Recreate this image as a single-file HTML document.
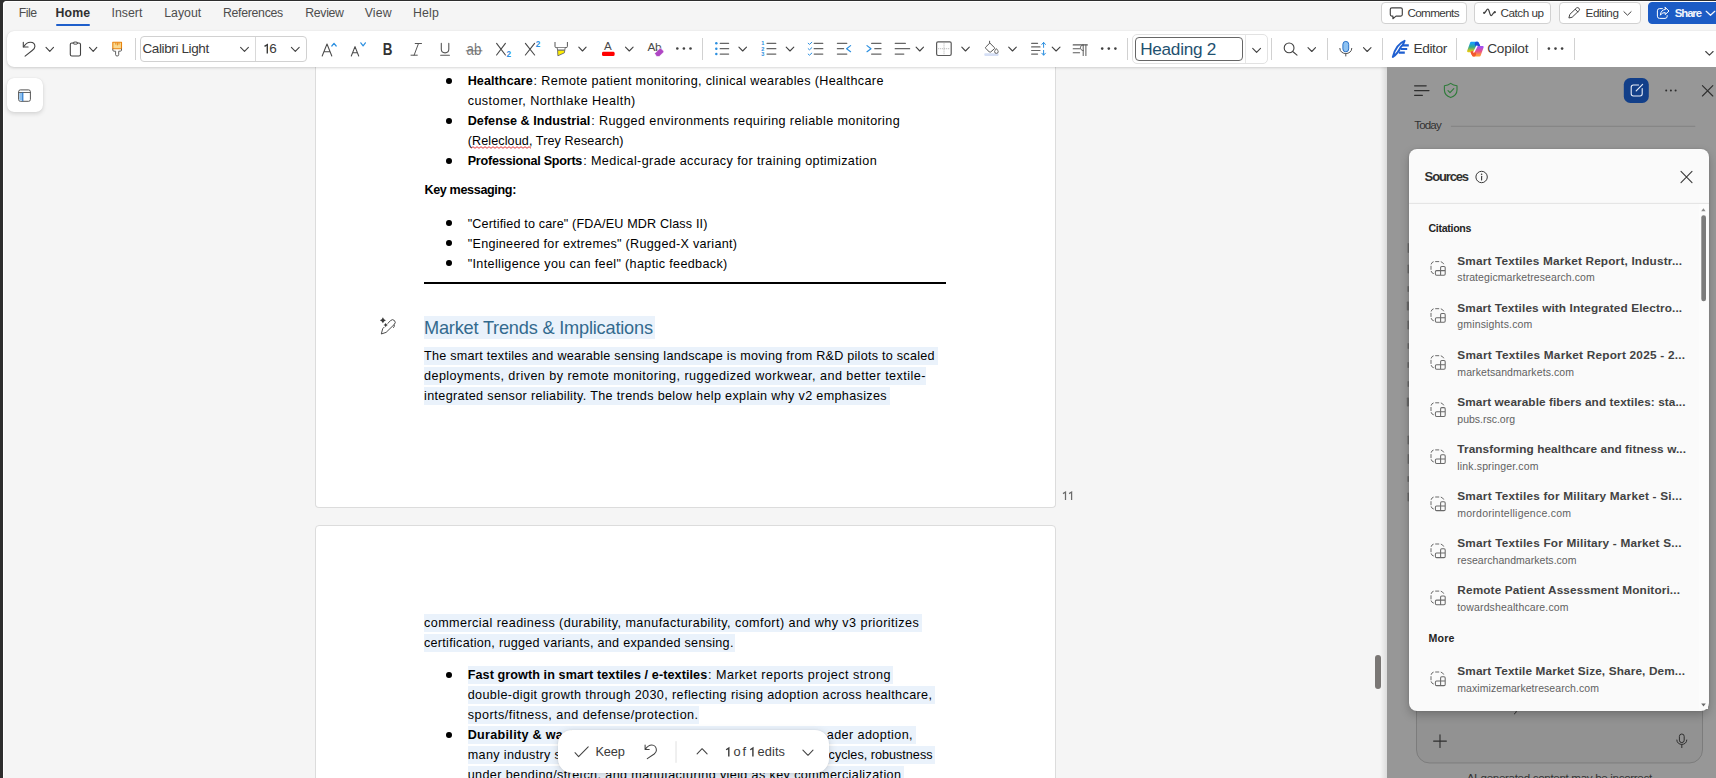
<!DOCTYPE html>
<html><head><meta charset="utf-8"><title>Word</title>
<style>
*{box-sizing:border-box;margin:0;padding:0}
html,body{width:1716px;height:778px;overflow:hidden;background:#2e2e2e;font-family:"Liberation Sans",sans-serif}
#app{position:absolute;left:0;top:0;width:1716px;height:778px;overflow:hidden}
#bg{position:absolute;left:3px;top:1px;width:1713px;height:777px;background:#f5f5f5;border-top-left-radius:4px;box-shadow:inset 1px 1px 0 #fff}
.t{position:absolute;white-space:pre;line-height:20px;height:20px;z-index:2}
.abs{position:absolute}
/* ribbon */
#ribbon{position:absolute;left:7px;top:31px;width:1716px;height:36px;background:#fff;border-radius:7px 0 0 7px;box-shadow:0 1px 3px rgba(0,0,0,.16),0 0 1px rgba(0,0,0,.10)}
#homeul{position:absolute;left:55.5px;top:23.7px;width:34.7px;height:2px;background:#1e5fcb;border-radius:1px}
.tbtn{position:absolute;top:2.4px;height:21.2px;border:1px solid #d1d1d1;border-radius:4px;background:#fff}
.vsep{position:absolute;width:1px;background:#d1d1d1;top:38.4px;height:21.2px}
.combo{position:absolute;border:1px solid #d1d1d1;border-radius:4px;background:#fff}
/* doc */
#sidebtn{position:absolute;left:7px;top:78.2px;width:35.5px;height:34px;background:#fff;border-radius:7px;box-shadow:0 2px 4px rgba(0,0,0,.13),0 0 1px rgba(0,0,0,.12)}
.page{position:absolute;left:315px;width:741px;background:#fff;border:1px solid #dcdcdc}
.hl{position:absolute;background:#eaf2fb;height:17.5px;z-index:1}
.bul{position:absolute;width:5.8px;height:5.8px;border-radius:50%;background:#000;z-index:2}
/* panel */
#panel{position:absolute;left:1387px;top:67px;width:329px;height:711px;background:#979797}
#card{position:absolute;left:1409px;top:149px;width:300px;height:561.5px;background:#fafafa;border-radius:8px;z-index:5;box-shadow:0 4px 10px rgba(0,0,0,.22),0 0 2px rgba(0,0,0,.15)}
#float{position:absolute;left:557.6px;top:730px;width:271px;height:43px;background:#fff;border-radius:14px;z-index:5;box-shadow:0 2px 8px rgba(0,0,0,.14),0 0 2px rgba(0,0,0,.10)}
svg{position:absolute;overflow:visible}
</style></head><body>
<div id="app">
<div id="bg"></div>
<!-- menu -->
<div id="homeul"></div>
<div class="tbtn" style="left:1381px;width:86px"></div>
<div class="tbtn" style="left:1474px;width:77.3px"></div>
<div class="tbtn" style="left:1558.5px;width:82.3px"></div>
<div class="tbtn" style="left:1648px;width:80px;background:#1b5bc5;border-color:#1b5bc5"></div>
<div class="page" style="top:60px;height:447.5px;border-top:none;border-radius:0 0 4px 4px"></div>
<div class="page" style="top:525px;height:300px;border-radius:4px 4px 0 0"></div>
<!-- ribbon -->
<div id="ribbon"></div>
<div class="vsep" style="left:134.8px"></div>
<div class="combo" style="left:140.3px;top:36.4px;width:166.3px;height:25.2px"></div>
<div class="abs" style="left:255.3px;top:37px;width:1px;height:24px;background:#d9d9d9"></div>
<div class="vsep" style="left:702.1px"></div>
<div class="vsep" style="left:1127.3px"></div>
<div class="combo" style="left:1132.2px;top:34.4px;width:135.8px;height:29.3px;border-color:#e2e2e2;border-radius:5px"></div>
<div class="abs" style="left:1134.8px;top:37.1px;width:108.2px;height:23.7px;border:1.3px solid #666;border-radius:4px;background:#fff"></div>
<div class="abs" style="left:1245.2px;top:35.2px;width:1px;height:27.6px;background:#e6e6e6"></div>
<div class="vsep" style="left:1271.2px"></div>
<div class="vsep" style="left:1326.8px"></div>
<div class="vsep" style="left:1381.9px"></div>
<div class="vsep" style="left:1456px"></div>
<div class="vsep" style="left:1537px"></div>
<div class="vsep" style="left:1574px"></div>
<!-- doc area -->
<div id="sidebtn"></div>
<div class="bul" style="left:446.2px;top:77.9px"></div>
<div class="bul" style="left:446.2px;top:117.9px"></div>
<div class="bul" style="left:446.2px;top:157.9px"></div>
<div class="bul" style="left:446.2px;top:220.3px"></div>
<div class="bul" style="left:446.2px;top:240.3px"></div>
<div class="bul" style="left:446.2px;top:260.3px"></div>
<div class="bul" style="left:446.2px;top:671.9px"></div>
<div class="bul" style="left:446.2px;top:731.9px"></div>
<div class="hl" style="left:424.0px;top:315.8px;width:230.5px;height:22.8px"></div>
<div class="hl" style="left:424.0px;top:347.0px;width:513.6px;height:17.5px"></div>
<div class="hl" style="left:424.0px;top:367.0px;width:502.4px;height:17.5px"></div>
<div class="hl" style="left:424.0px;top:387.0px;width:466.4px;height:17.5px"></div>
<div class="hl" style="left:424.0px;top:614.0px;width:498.2px;height:17.5px"></div>
<div class="hl" style="left:424.0px;top:634.0px;width:310.5px;height:17.5px"></div>
<div class="hl" style="left:467.7px;top:666.0px;width:425.5px;height:17.5px"></div>
<div class="hl" style="left:467.7px;top:686.0px;width:467.3px;height:17.5px"></div>
<div class="hl" style="left:467.7px;top:706.0px;width:231.3px;height:17.5px"></div>
<div class="hl" style="left:467.7px;top:726.0px;width:448.3px;height:17.5px"></div>
<div class="hl" style="left:467.7px;top:746.0px;width:467.8px;height:17.5px"></div>
<div class="hl" style="left:467.7px;top:766.0px;width:436.3px;height:17.5px"></div>
<div class="abs" style="left:424.4px;top:282.2px;width:521.5px;height:1.6px;background:#000;z-index:2"></div>
<svg style="left:0;top:0;z-index:2" width="1716" height="778"><path d="M471 148.3 L473.0 146.7 L475.0 148.3 L477.0 146.7 L479.0 148.3 L481.0 146.7 L483.0 148.3 L485.0 146.7 L487.0 148.3 L489.0 146.7 L491.0 148.3 L493.0 146.7 L495.0 148.3 L497.0 146.7 L499.0 148.3 L501.0 146.7 L503.0 148.3 L505.0 146.7 L507.0 148.3 L509.0 146.7 L511.0 148.3 L513.0 146.7 L515.0 148.3 L517.0 146.7 L519.0 148.3 L521.0 146.7 L523.0 148.3 L525.0 146.7 L527.0 148.3 L529.0 146.7 L531.0 148.3" fill="none" stroke="#e53030" stroke-width="0.95" stroke-linejoin="round"/></svg>
<div class="abs" style="left:1375.4px;top:654.7px;width:5.8px;height:34.8px;border-radius:3px;background:#7a7775"></div>

<!-- panel -->
<div class="abs" style="left:1380px;top:67px;width:7px;height:711px;background:linear-gradient(to right,rgba(0,0,0,0),rgba(0,0,0,.10))"></div>
<div id="panel"></div>
<div id="card"></div>
<div id="float"></div>
<svg style="left:0;top:0;z-index:3" width="1716" height="778"><path d="M23.3 42.2 V47 H28.1" fill="none" stroke="#424242" stroke-width="1.1" stroke-linecap="round" stroke-linejoin="round" />
<path d="M23.7 46.8 C25.3 44 27.8 42.2 30.4 42.2 C33 42.2 34.9 44 34.9 46.5 C34.9 48.1 33.8 49.3 32.2 50.5 L25.1 56.1" fill="none" stroke="#424242" stroke-width="1.1" stroke-linecap="round" stroke-linejoin="round" />
<path d="M46.0 47.3 L49.8 51.3 L53.5 47.3" fill="none" stroke="#424242" stroke-width="1.1" stroke-linecap="round" stroke-linejoin="round" />
<rect x="70.3" y="43.0" width="10.2" height="13.0" rx="1.6" fill="none" stroke="#424242" stroke-width="1.1" />
<ellipse cx="75.4" cy="43.1" rx="2.4" ry="1.1" fill="#fff" stroke="#424242" stroke-width="1"/>
<path d="M89.5 47.3 L93.2 51.3 L96.8 47.3" fill="none" stroke="#424242" stroke-width="1.1" stroke-linecap="round" stroke-linejoin="round" />
<path d="M112.8 42.3 H121.5 V48.8 H112.8 Z" fill="#f9d88f" stroke="#e8830e" stroke-width="1.1" stroke-linejoin="round"/>
<path d="M115.8 42.6 V44.6 M117.4 42.6 V45.4 M119 42.6 V44.6" stroke="#e8830e" stroke-width="0.9" fill="none"/>
<path d="M112.8 49 V50 Q112.8 51.2 114 51.2 H115.6 V54.8 Q115.6 56 117.15 56 Q118.7 56 118.7 54.8 V51.2 H120.3 Q121.5 51.2 121.5 50 V49" fill="none" stroke="#616161" stroke-width="1.0" stroke-linecap="round" stroke-linejoin="round" />
<path d="M240.6 47.3 L244.5 51.3 L248.4 47.3" fill="none" stroke="#424242" stroke-width="1.1" stroke-linecap="round" stroke-linejoin="round" />
<path d="M291.4 47.3 L295.3 51.3 L299.2 47.3" fill="none" stroke="#424242" stroke-width="1.1" stroke-linecap="round" stroke-linejoin="round" />
<path d="M322.2 56 L327 44 L331.8 56 M323.9 51.8 H330.1" fill="none" stroke="#4a4a4a" stroke-width="1.05" stroke-linecap="round" stroke-linejoin="round" />
<path d="M331.8 46.0 L334.0 43.3 L336.2 46.0" fill="none" stroke="#2b8fe0" stroke-width="1.2" stroke-linecap="round" stroke-linejoin="round" />
<path d="M351.3 56 L355 46.6 L358.7 56 M352.7 52.7 H357.3" fill="none" stroke="#4a4a4a" stroke-width="1.05" stroke-linecap="round" stroke-linejoin="round" />
<path d="M360.8 42.8 L363.1 45.9 L365.4 42.8" fill="none" stroke="#2b8fe0" stroke-width="1.2" stroke-linecap="round" stroke-linejoin="round" />
<text transform="translate(382.7 55) scale(0.86 1)" font-size="15.6" font-weight="700" fill="#333" font-family="Liberation Sans, sans-serif">B</text>
<path d="M415.2 43.5 H421.5 M411 55.2 H417.3 M418.5 43.5 L414.1 55.2" fill="none" stroke="#555" stroke-width="1.0" stroke-linecap="round" stroke-linejoin="round" />
<path d="M441.3 43.4 V49.3 C441.3 54 448.8 54 448.8 49.3 V43.4" fill="none" stroke="#555" stroke-width="1.1" stroke-linecap="round" stroke-linejoin="round" />
<path d="M440.7 55.2 H449.4" fill="none" stroke="#555" stroke-width="1.1" stroke-linecap="round" stroke-linejoin="round" />
<text transform="translate(466.6 55.4) scale(0.78 1)" font-size="17" fill="#777" font-family="Liberation Sans, sans-serif">ab</text>
<path d="M466.2 50.8 H482" fill="none" stroke="#666" stroke-width="0.9" stroke-linecap="round" stroke-linejoin="round" />
<path d="M496.6 43.4 L505.4 55 M505.4 43.4 L496.6 55" fill="none" stroke="#4a4a4a" stroke-width="1.15" stroke-linecap="round" stroke-linejoin="round" />
<text x="506.5" y="57.0" font-size="8.2" font-weight="700" fill="#2b8fe0" font-family="Liberation Sans, sans-serif" >2</text>
<path d="M525.4 43.4 L534.6 55 M534.6 43.4 L525.4 55" fill="none" stroke="#4a4a4a" stroke-width="1.15" stroke-linecap="round" stroke-linejoin="round" />
<text x="535.7" y="47.2" font-size="8.2" font-weight="700" fill="#2b8fe0" font-family="Liberation Sans, sans-serif" >2</text>
<path d="M555 42.4 V46.4 Q555 47.6 556.2 47.6 H566.2 Q567.4 47.6 567.4 46.4 V42.4" fill="none" stroke="#555" stroke-width="1.0" stroke-linecap="round" stroke-linejoin="round" />
<path d="M557.2 47.8 L557.6 50.2 H564.8 L565.2 47.8" fill="#fff" stroke="#666" stroke-width="0.9" stroke-linejoin="round"/>
<path d="M557.6 50.2 H564.8 L564.4 52.8 L557.9 55.8 Z" fill="#ffee00" stroke="#666" stroke-width="0.9" stroke-linejoin="round"/>
<path d="M578.8 47.2 L582.5 51.0 L586.1 47.2" fill="none" stroke="#424242" stroke-width="1.1" stroke-linecap="round" stroke-linejoin="round" />
<text x="603.9" y="50.1" font-size="11.6" font-weight="400" fill="#4a4a4a" font-family="Liberation Sans, sans-serif" >A</text>
<rect x="602.0" y="51.8" width="12.6" height="4.3" rx="1.4" fill="#ff0000" stroke="none" stroke-width="0" />
<path d="M625.5 47.2 L629.3 51.0 L633.1 47.2" fill="none" stroke="#424242" stroke-width="1.1" stroke-linecap="round" stroke-linejoin="round" />
<text x="647.4" y="50.6" font-size="11.8" font-weight="400" fill="#4a4a4a" font-family="Liberation Sans, sans-serif" letter-spacing="-0.3">Ab</text>
<path d="M654.6 53.6 L659.6 48.6 Q660.4 47.8 661.2 48.6 L663.4 50.8 Q664.2 51.6 663.4 52.4 L659.2 56.6 H656.6 Z" fill="#b046c4" stroke="#fff" stroke-width="0.6"/>
<circle cx="677.3" cy="48.5" r="1.3" fill="#424242"/>
<circle cx="683.9" cy="48.5" r="1.3" fill="#424242"/>
<circle cx="690.5" cy="48.5" r="1.3" fill="#424242"/>
<circle cx="716.3" cy="43.3" r="1.25" fill="#2b8fe0"/>
<path d="M720.2 43.3 H728.6" fill="none" stroke="#666" stroke-width="1.25" stroke-linecap="round" stroke-linejoin="round" />
<circle cx="716.3" cy="48.7" r="1.25" fill="#2b8fe0"/>
<path d="M720.2 48.7 H728.6" fill="none" stroke="#666" stroke-width="1.25" stroke-linecap="round" stroke-linejoin="round" />
<circle cx="716.3" cy="54.1" r="1.25" fill="#2b8fe0"/>
<path d="M720.2 54.1 H728.6" fill="none" stroke="#666" stroke-width="1.25" stroke-linecap="round" stroke-linejoin="round" />
<path d="M738.9 47.2 L742.7 51.0 L746.5 47.2" fill="none" stroke="#424242" stroke-width="1.1" stroke-linecap="round" stroke-linejoin="round" />
<text x="761.2" y="45.3" font-size="5.6" font-weight="700" fill="#2b8fe0" font-family="Liberation Sans, sans-serif" >1</text>
<path d="M767 43.3 H775.8" fill="none" stroke="#666" stroke-width="1.25" stroke-linecap="round" stroke-linejoin="round" />
<text x="761.2" y="50.7" font-size="5.6" font-weight="700" fill="#2b8fe0" font-family="Liberation Sans, sans-serif" >2</text>
<path d="M767 48.7 H775.8" fill="none" stroke="#666" stroke-width="1.25" stroke-linecap="round" stroke-linejoin="round" />
<text x="761.2" y="56.1" font-size="5.6" font-weight="700" fill="#2b8fe0" font-family="Liberation Sans, sans-serif" >3</text>
<path d="M767 54.1 H775.8" fill="none" stroke="#666" stroke-width="1.25" stroke-linecap="round" stroke-linejoin="round" />
<path d="M786.2 47.2 L790.0 51.0 L793.8 47.2" fill="none" stroke="#424242" stroke-width="1.1" stroke-linecap="round" stroke-linejoin="round" />
<path d="M808.2 43.3 L809.5 44.4 L811.8 42.3" fill="none" stroke="#2b8fe0" stroke-width="1.0" stroke-linecap="round" stroke-linejoin="round" />
<path d="M814.2 43.3 H822.8" fill="none" stroke="#666" stroke-width="1.25" stroke-linecap="round" stroke-linejoin="round" />
<path d="M808.2 48.7 L809.5 49.8 L811.8 47.7" fill="none" stroke="#2b8fe0" stroke-width="1.0" stroke-linecap="round" stroke-linejoin="round" />
<path d="M814.2 48.7 H822.8" fill="none" stroke="#666" stroke-width="1.25" stroke-linecap="round" stroke-linejoin="round" />
<path d="M808.2 54.1 L809.5 55.2 L811.8 53.1" fill="none" stroke="#2b8fe0" stroke-width="1.0" stroke-linecap="round" stroke-linejoin="round" />
<path d="M814.2 54.1 H822.8" fill="none" stroke="#666" stroke-width="1.25" stroke-linecap="round" stroke-linejoin="round" />
<path d="M837.4 43.3 H846.8 M837.4 48.7 H843.6 M837.4 54.1 H846.8" fill="none" stroke="#666" stroke-width="1.25" stroke-linecap="round" stroke-linejoin="round" />
<path d="M850.6 45.6 L846.6 48.7 L850.6 51.7" fill="none" stroke="#2b8fe0" stroke-width="1.2" stroke-linecap="round" stroke-linejoin="round" />
<path d="M871.6 43.3 H881 M874.8 48.7 H881 M871.6 54.1 H881" fill="none" stroke="#666" stroke-width="1.25" stroke-linecap="round" stroke-linejoin="round" />
<path d="M867 45.6 L871 48.7 L867 51.7" fill="none" stroke="#2b8fe0" stroke-width="1.2" stroke-linecap="round" stroke-linejoin="round" />
<path d="M895.2 43.3 H905.4 M895.2 48.7 H909.6 M895.2 54.1 H903.8" fill="none" stroke="#666" stroke-width="1.25" stroke-linecap="round" stroke-linejoin="round" />
<path d="M916.1 47.2 L919.8 51.0 L923.5 47.2" fill="none" stroke="#424242" stroke-width="1.1" stroke-linecap="round" stroke-linejoin="round" />
<rect x="936.6" y="41.9" width="14.6" height="13.6" rx="1.4" fill="none" stroke="#5a5a5a" stroke-width="1.2" />
<path d="M944 43.4 V54.2 M938.2 48.7 H949.8" stroke="#9a9a9a" stroke-width="0.8" stroke-dasharray="1 1" fill="none"/>
<path d="M961.8 47.2 L965.5 51.0 L969.3 47.2" fill="none" stroke="#424242" stroke-width="1.1" stroke-linecap="round" stroke-linejoin="round" />
<rect x="984.3" y="53.3" width="14.3" height="2.6" rx="0.8" fill="#d5dff5" stroke="none" stroke-width="0" />
<path d="M989.6 41.2 V44.2" fill="none" stroke="#555" stroke-width="1.0" stroke-linecap="round" stroke-linejoin="round" />
<path d="M989.8 43.0 L994.4 47.6 Q995 48.2 994.4 48.8 L990.6 52.0 Q990 52.5 989.4 52.0 L985.7 48.3 Q985.2 47.7 985.7 47.1 Z" fill="#fff" stroke="#555" stroke-width="1.0" stroke-linejoin="round"/>
<path d="M996.4 48.6 Q998.2 50.8 998.2 51.6 A1.8 1.8 0 0 1 994.6 51.6 Q994.6 50.8 996.4 48.6 Z" fill="#fff" stroke="#555" stroke-width="0.9"/>
<path d="M1008.7 47.2 L1012.5 51.0 L1016.3 47.2" fill="none" stroke="#424242" stroke-width="1.1" stroke-linecap="round" stroke-linejoin="round" />
<path d="M1031.6 43.3 H1037.6 M1031.6 46.9 H1040 M1031.6 50.5 H1040 M1031.6 54.1 H1037.6" fill="none" stroke="#666" stroke-width="1.15" stroke-linecap="round" stroke-linejoin="round" />
<path d="M1043.6 42.6 V47.4 M1043.6 50.4 V55 M1041.8 44.4 L1043.6 42.4 L1045.4 44.4 M1041.8 53.2 L1043.6 55.2 L1045.4 53.2" fill="none" stroke="#2b8fe0" stroke-width="1.0" stroke-linecap="round" stroke-linejoin="round" />
<path d="M1052.2 47.2 L1056.1 51.0 L1060.0 47.2" fill="none" stroke="#424242" stroke-width="1.1" stroke-linecap="round" stroke-linejoin="round" />
<path d="M1073.2 44.9 H1087.4 M1073.2 48.7 H1079.6 M1073.2 52.7 H1079.6" fill="none" stroke="#5a5a5a" stroke-width="1.1" stroke-linecap="round" stroke-linejoin="round" />
<path d="M1085.9 44.9 V55.6 M1083.2 44.9 V55.6" fill="none" stroke="#5a5a5a" stroke-width="1.0" stroke-linecap="round" stroke-linejoin="round" />
<path d="M1083.2 44.9 C1079.4 44.9 1079.4 50.6 1083.2 50.6" fill="none" stroke="#5a5a5a" stroke-width="1.0" stroke-linecap="round" stroke-linejoin="round" />
<circle cx="1102.2" cy="48.6" r="1.3" fill="#424242"/>
<circle cx="1108.8" cy="48.6" r="1.3" fill="#424242"/>
<circle cx="1115.4" cy="48.6" r="1.3" fill="#424242"/>
<path d="M1252.7 48.3 L1256.6 52.3 L1260.5 48.3" fill="none" stroke="#424242" stroke-width="1.1" stroke-linecap="round" stroke-linejoin="round" />
<circle cx="1289.1" cy="47.9" r="4.9" fill="none" stroke="#424242" stroke-width="1.1"/>
<path d="M1292.7 51.5 L1297 55.2" fill="none" stroke="#424242" stroke-width="1.1" stroke-linecap="round" stroke-linejoin="round" />
<path d="M1308.0 47.7 L1311.8 51.5 L1315.5 47.7" fill="none" stroke="#424242" stroke-width="1.1" stroke-linecap="round" stroke-linejoin="round" />
<rect x="1342.9" y="41.4" width="5.8" height="10.4" rx="2.9" fill="#8dc2f2" stroke="#2a72c8" stroke-width="1.0" />
<path d="M1339.8 48.4 C1339.8 55.4 1351.8 55.4 1351.8 48.4 M1345.8 53.8 V56" fill="none" stroke="#505050" stroke-width="1.0" stroke-linecap="round" stroke-linejoin="round" />
<path d="M1363.5 47.7 L1367.2 51.5 L1371.0 47.7" fill="none" stroke="#424242" stroke-width="1.1" stroke-linecap="round" stroke-linejoin="round" />
<path d="M1392.8 57 C1394.5 50 1398 43.5 1404.6 40.8 C1404 43.6 1402.6 45.4 1400.8 47 C1399 51 1396.6 54.4 1392.8 57 Z" fill="none" stroke="#1f5fd0" stroke-width="1.9" stroke-linejoin="round"/>
<path d="M1402.4 45.3 H1408.8 M1400.8 49 H1407.2 M1398.8 52.7 H1404.8" stroke="#1f5fd0" stroke-width="2.2" fill="none"/>
<defs><linearGradient id="cg1" x1="0" y1="0" x2="0" y2="1"><stop offset="0" stop-color="#179ef6"/><stop offset="0.5" stop-color="#34aa8c"/><stop offset="1" stop-color="#e0c912"/></linearGradient><linearGradient id="cg2" x1="0" y1="0" x2="0" y2="1"><stop offset="0" stop-color="#a250f3"/><stop offset="0.5" stop-color="#e94f8c"/><stop offset="1" stop-color="#ff9b3c"/></linearGradient></defs>
<path d="M1471.2 42.9 H1477.6 L1479 45.8 H1476.2 L1473.8 51.2 H1468.2 Z" fill="url(#cg1)" stroke="url(#cg1)" stroke-width="2.2" stroke-linejoin="round"/>
<path d="M1476.2 42.9 H1477.6 L1479 45.8 H1476.6 L1475.8 44.2 Z" fill="#1a50d6" stroke="#1a50d6" stroke-width="2.2" stroke-linejoin="round"/>
<path d="M1479.6 55.3 H1473.2 L1471.8 52.4 H1474.6 L1477 47 H1482.6 Z" fill="url(#cg2)" stroke="url(#cg2)" stroke-width="2.2" stroke-linejoin="round"/>
<path d="M1474.6 55.3 H1473.2 L1471.8 52.4 H1474.2 L1475 54 Z" fill="#f3582c" stroke="#f3582c" stroke-width="2.2" stroke-linejoin="round"/>
<path d="M1476.9 46.2 L1473.9 52" stroke="#fff" stroke-width="1.5" stroke-linecap="round"/>
<circle cx="1548.9" cy="48.6" r="1.3" fill="#424242"/>
<circle cx="1555.5" cy="48.6" r="1.3" fill="#424242"/>
<circle cx="1562.1" cy="48.6" r="1.3" fill="#424242"/>
<path d="M1705.7 51.5 L1709.4 55.2 L1713.1 51.5" fill="none" stroke="#424242" stroke-width="1.1" stroke-linecap="round" stroke-linejoin="round" />
<path d="M1391.8 7.8 H1400.8 Q1402.3 7.8 1402.3 9.3 V14.6 Q1402.3 16.1 1400.8 16.1 H1396 L1392.9 18.7 V16.1 H1391.8 Q1390.3 16.1 1390.3 14.6 V9.3 Q1390.3 7.8 1391.8 7.8 Z" fill="none" stroke="#424242" stroke-width="1.15" stroke-linecap="round" stroke-linejoin="round" />
<path d="M1484 12.9 C1486 12.9 1486.2 9.2 1487.8 9.2 C1489.6 9.2 1489.4 15.6 1491.2 15.6 C1492.6 15.6 1492.6 12.3 1494.8 12.3" fill="none" stroke="#424242" stroke-width="1.2" stroke-linecap="round" stroke-linejoin="round" />
<circle cx="1484.2" cy="12.8" r="1.1" fill="#424242"/><circle cx="1494.8" cy="12.2" r="1.1" fill="#424242"/>
<path d="M1569 17.6 L1569.8 14.4 L1576.6 7.9 Q1577.8 7.1 1578.9 8.2 Q1580 9.3 1579.2 10.5 L1572.4 17 Z M1575.2 9.3 L1577.8 11.9" fill="none" stroke="#424242" stroke-width="1.0" stroke-linecap="round" stroke-linejoin="round" />
<path d="M1623.9 11.7 L1627.5 15.2 L1631.1 11.7" fill="none" stroke="#424242" stroke-width="1.0" stroke-linecap="round" stroke-linejoin="round" />
<path d="M1662.4 8.6 H1659.6 Q1657.4 8.6 1657.4 10.8 V16.2 Q1657.4 18.4 1659.6 18.4 H1665 Q1667.2 18.4 1667.2 16.2 V15.6" fill="none" stroke="#fff" stroke-width="1.0" stroke-linecap="round" stroke-linejoin="round" />
<path d="M1665.2 7.4 L1669 11 L1665.2 14.6 V12.6 Q1661.8 12.4 1660.4 15.2 Q1660.6 10 1665.2 9.4 Z" fill="none" stroke="#fff" stroke-width="1.0" stroke-linecap="round" stroke-linejoin="round" />
<path d="M1706.2 11.3 L1710.5 15.3 L1714.8 11.3" fill="none" stroke="#f2f5fc" stroke-width="1.25" stroke-linecap="round" stroke-linejoin="round" />
<rect x="18.6" y="89.9" width="11.8" height="11.4" rx="1.8" fill="#fff" stroke="#555" stroke-width="1.0" />
<path d="M19.3 92.7 H22.6 V100.5 H20.4 Q19.3 100.5 19.3 99.4 Z" fill="#8cc0f0"/>
<path d="M18.8 92.5 H30.2" fill="none" stroke="#555" stroke-width="0.9" stroke-linecap="round" stroke-linejoin="round" />
<path d="M22.8 92.8 V100.8" fill="none" stroke="#1c6fc9" stroke-width="1.1" stroke-linecap="round" stroke-linejoin="round" />
<path d="M381.4 333.6 L382.7 328.7 L390.5 320.6 Q392.5 318.7 394.4 320.5 Q396.2 322.4 394.4 324.3 L386.4 332.1 Z" fill="none" stroke="#424242" stroke-width="0.95" stroke-linecap="round" stroke-linejoin="round" />
<path d="M394.3 324.8 Q395 326.2 393.6 327.6" fill="none" stroke="#424242" stroke-width="0.9" stroke-linecap="round" stroke-linejoin="round" />
<path d="M382.90 317.30 L383.98 319.22 L385.90 320.30 L383.98 321.38 L382.90 323.30 L381.82 321.38 L379.90 320.30 L381.82 319.22 Z" fill="#3a3a3a"/>
<circle cx="385.7" cy="325.1" r="2.3" fill="#fff"/>
<path d="M385.70 323.00 L386.46 324.34 L387.80 325.10 L386.46 325.86 L385.70 327.20 L384.94 325.86 L383.60 325.10 L384.94 324.34 Z" fill="#3a3a3a"/>
<path d="M1414.6 85.8 H1426.2 M1414.6 90.6 H1429 M1414.6 95.3 H1422.4" fill="none" stroke="#2e2e2e" stroke-width="1.2" stroke-linecap="round" stroke-linejoin="round" />
<path d="M1450.7 83.4 C1452.8 85 1455 85.6 1457 85.8 V90 C1457 94 1454.2 96.4 1450.7 97.6 C1447.2 96.4 1444.4 94 1444.4 90 V85.8 C1446.4 85.6 1448.6 85 1450.7 83.4 Z" fill="none" stroke="#2f7b3a" stroke-width="1.1" stroke-linecap="round" stroke-linejoin="round" />
<path d="M1448 90.6 L1450 92.6 L1453.8 88.6" fill="none" stroke="#2f7b3a" stroke-width="1.1" stroke-linecap="round" stroke-linejoin="round" />
<rect x="1623.8" y="78.0" width="25.0" height="25.0" rx="6.5" fill="#123f89" stroke="none" stroke-width="0" />
<path d="M1638.6 85 H1633.4 Q1631.2 85 1631.2 87.2 V93.8 Q1631.2 96 1633.4 96 H1640 Q1642.2 96 1642.2 93.8 V88.6" fill="none" stroke="#e9eef8" stroke-width="1.1" stroke-linecap="round" stroke-linejoin="round" />
<path d="M1642.6 84.4 L1636.2 90.8" fill="none" stroke="#e9eef8" stroke-width="1.2" stroke-linecap="round" stroke-linejoin="round" />
<circle cx="1666.2" cy="90.5" r="1.0" fill="#2e2e2e"/>
<circle cx="1670.9" cy="90.5" r="1.0" fill="#2e2e2e"/>
<circle cx="1675.6" cy="90.5" r="1.0" fill="#2e2e2e"/>
<path d="M1702.4 85.6 L1712.8 96 M1712.8 85.6 L1702.4 96" fill="none" stroke="#2e2e2e" stroke-width="1.1" stroke-linecap="round" stroke-linejoin="round" />
<rect x="1416.5" y="690" width="286" height="73" rx="13" fill="rgba(0,0,0,0.03)" stroke="rgba(0,0,0,0.16)" stroke-width="1"/>
<path d="M1440 734.8 V747.4 M1433.6 741.1 H1446.4" fill="none" stroke="#2e2e2e" stroke-width="1.1" stroke-linecap="round" stroke-linejoin="round" />
<rect x="1679.4" y="734.0" width="4.8" height="8.6" rx="2.4" fill="none" stroke="#2e2e2e" stroke-width="1.0" />
<path d="M1676.8 740 C1676.8 746 1686.8 746 1686.8 740 M1681.8 744.6 V747.6" fill="none" stroke="#2e2e2e" stroke-width="1.0" stroke-linecap="round" stroke-linejoin="round" />
<path d="M1450.9 126.3 H1695.3" stroke="#838383" stroke-width="1"/>
<rect x="1407.6" y="243.0" width="1.4" height="10" rx="0.7" fill="#2e2e2e" opacity="0.42"/>
<rect x="1407.5" y="264.5" width="1.5" height="9" rx="0.7" fill="#2e2e2e" opacity="0.42"/>
<rect x="1407.4" y="286.0" width="1.6" height="6" rx="0.7" fill="#2e2e2e" opacity="0.42"/>
<rect x="1406.8" y="301.5" width="2.2" height="9" rx="0.7" fill="#2e2e2e" opacity="0.42"/>
<rect x="1407.4" y="320.5" width="1.6" height="9" rx="0.7" fill="#2e2e2e" opacity="0.42"/>
<rect x="1407.5" y="343.0" width="1.5" height="6" rx="0.7" fill="#2e2e2e" opacity="0.42"/>
<rect x="1407.4" y="362.0" width="1.6" height="6" rx="0.7" fill="#2e2e2e" opacity="0.42"/>
<rect x="1407.5" y="381.0" width="1.5" height="6" rx="0.7" fill="#2e2e2e" opacity="0.42"/>
<rect x="1406.8" y="397.5" width="2.2" height="9" rx="0.7" fill="#2e2e2e" opacity="0.42"/>
<rect x="1407.5" y="435.5" width="1.5" height="9" rx="0.7" fill="#2e2e2e" opacity="0.42"/>
<rect x="1407.6" y="454.0" width="1.4" height="10" rx="0.7" fill="#2e2e2e" opacity="0.42"/>
<rect x="1407.4" y="476.0" width="1.6" height="6" rx="0.7" fill="#2e2e2e" opacity="0.42"/>
<rect x="1407.5" y="492.5" width="1.5" height="9" rx="0.7" fill="#2e2e2e" opacity="0.42"/>
<path d="M1516.4 711.2 Q1515.8 713.6 1514.4 714" fill="none" stroke="#333" stroke-width="1.0" stroke-linecap="round" stroke-linejoin="round" />
<path d="M1062.98 493.62 L1065.50 492.02 V500.00" fill="none" stroke="#6a6a6a" stroke-width="1.25" stroke-linejoin="miter" stroke-linecap="butt"/>
<path d="M1069.08 493.62 L1071.60 492.02 V500.00" fill="none" stroke="#6a6a6a" stroke-width="1.25" stroke-linejoin="miter" stroke-linecap="butt"/>
<path d="M264.51 46.43 L267.30 44.67 V53.50" fill="none" stroke="#3a3a3a" stroke-width="1.4" stroke-linejoin="miter" stroke-linecap="butt"/></svg>
<svg style="left:0;top:0;z-index:6" width="1716" height="778"><circle cx="1481.6" cy="177" r="5.7" fill="none" stroke="#3a3a3a" stroke-width="1"/>
<circle cx="1481.6" cy="174.3" r="0.8" fill="#3a3a3a"/>
<path d="M1481.6 176.3 V180" fill="none" stroke="#3a3a3a" stroke-width="1.1" stroke-linecap="round" stroke-linejoin="round" />
<path d="M1681 171.4 L1692 182.6 M1692 171.4 L1681 182.6" fill="none" stroke="#3a3a3a" stroke-width="1.1" stroke-linecap="round" stroke-linejoin="round" />
<path d="M1409 203.4 H1709" stroke="#e2e2e2" stroke-width="1"/>
<rect x="1699" y="204" width="9" height="505" fill="#fcfcfc"/>
<path d="M1701.2 211.2 L1703.4 208.2 L1705.6 211.2 Z" fill="#8a8a8a"/>
<rect x="1701.3" y="215.3" width="4.7" height="86" rx="2.3" fill="#7c7c7c"/>
<path d="M1701.2 703.4 L1705.8 703.4 L1703.5 706.4 Z" fill="#6a6a6a"/>
<path d="M1435.6 261.6 H1438.8 M1431 266.2 V269.4 M1431.2 264.0 Q1431.6 262.2 1433.2 261.8 M1441.2 261.8 Q1442.8 262.2 1443.6 263.8 M1431.2 271.4 Q1431.6 273.2 1433.4 273.6" fill="none" stroke="#6a6a6a" stroke-width="1.0" stroke-linecap="round" stroke-linejoin="round" />
<path d="M1436.6 270.6 H1445.2 V267.6 Q1445.2 266.4 1444 266.4 H1441.8 Q1440.6 266.4 1440.6 267.6 V270.6 M1440.6 270.6 H1436.6 Q1435.4 270.6 1435.4 271.8 V274.0 Q1435.4 275.2 1436.6 275.2 H1444 Q1445.2 275.2 1445.2 274.0 V270.6 M1440.6 270.6 V275.2" fill="none" stroke="#6a6a6a" stroke-width="1.05" stroke-linecap="round" stroke-linejoin="round" />
<path d="M1435.6 308.7 H1438.8 M1431 313.3 V316.5 M1431.2 311.1 Q1431.6 309.3 1433.2 308.9 M1441.2 308.9 Q1442.8 309.3 1443.6 310.9 M1431.2 318.5 Q1431.6 320.3 1433.4 320.7" fill="none" stroke="#6a6a6a" stroke-width="1.0" stroke-linecap="round" stroke-linejoin="round" />
<path d="M1436.6 317.7 H1445.2 V314.7 Q1445.2 313.5 1444 313.5 H1441.8 Q1440.6 313.5 1440.6 314.7 V317.7 M1440.6 317.7 H1436.6 Q1435.4 317.7 1435.4 318.9 V321.1 Q1435.4 322.3 1436.6 322.3 H1444 Q1445.2 322.3 1445.2 321.1 V317.7 M1440.6 317.7 V322.3" fill="none" stroke="#6a6a6a" stroke-width="1.05" stroke-linecap="round" stroke-linejoin="round" />
<path d="M1435.6 355.7 H1438.8 M1431 360.3 V363.5 M1431.2 358.1 Q1431.6 356.3 1433.2 355.9 M1441.2 355.9 Q1442.8 356.3 1443.6 357.9 M1431.2 365.5 Q1431.6 367.3 1433.4 367.7" fill="none" stroke="#6a6a6a" stroke-width="1.0" stroke-linecap="round" stroke-linejoin="round" />
<path d="M1436.6 364.7 H1445.2 V361.7 Q1445.2 360.5 1444 360.5 H1441.8 Q1440.6 360.5 1440.6 361.7 V364.7 M1440.6 364.7 H1436.6 Q1435.4 364.7 1435.4 365.9 V368.1 Q1435.4 369.3 1436.6 369.3 H1444 Q1445.2 369.3 1445.2 368.1 V364.7 M1440.6 364.7 V369.3" fill="none" stroke="#6a6a6a" stroke-width="1.05" stroke-linecap="round" stroke-linejoin="round" />
<path d="M1435.6 402.8 H1438.8 M1431 407.4 V410.6 M1431.2 405.2 Q1431.6 403.4 1433.2 403.0 M1441.2 403.0 Q1442.8 403.4 1443.6 405.0 M1431.2 412.6 Q1431.6 414.4 1433.4 414.8" fill="none" stroke="#6a6a6a" stroke-width="1.0" stroke-linecap="round" stroke-linejoin="round" />
<path d="M1436.6 411.8 H1445.2 V408.8 Q1445.2 407.6 1444 407.6 H1441.8 Q1440.6 407.6 1440.6 408.8 V411.8 M1440.6 411.8 H1436.6 Q1435.4 411.8 1435.4 413.0 V415.2 Q1435.4 416.4 1436.6 416.4 H1444 Q1445.2 416.4 1445.2 415.2 V411.8 M1440.6 411.8 V416.4" fill="none" stroke="#6a6a6a" stroke-width="1.05" stroke-linecap="round" stroke-linejoin="round" />
<path d="M1435.6 449.9 H1438.8 M1431 454.5 V457.7 M1431.2 452.3 Q1431.6 450.5 1433.2 450.1 M1441.2 450.1 Q1442.8 450.5 1443.6 452.1 M1431.2 459.7 Q1431.6 461.5 1433.4 461.9" fill="none" stroke="#6a6a6a" stroke-width="1.0" stroke-linecap="round" stroke-linejoin="round" />
<path d="M1436.6 458.9 H1445.2 V455.9 Q1445.2 454.7 1444 454.7 H1441.8 Q1440.6 454.7 1440.6 455.9 V458.9 M1440.6 458.9 H1436.6 Q1435.4 458.9 1435.4 460.1 V462.3 Q1435.4 463.5 1436.6 463.5 H1444 Q1445.2 463.5 1445.2 462.3 V458.9 M1440.6 458.9 V463.5" fill="none" stroke="#6a6a6a" stroke-width="1.05" stroke-linecap="round" stroke-linejoin="round" />
<path d="M1435.6 497.0 H1438.8 M1431 501.6 V504.8 M1431.2 499.4 Q1431.6 497.6 1433.2 497.2 M1441.2 497.2 Q1442.8 497.6 1443.6 499.2 M1431.2 506.8 Q1431.6 508.6 1433.4 509.0" fill="none" stroke="#6a6a6a" stroke-width="1.0" stroke-linecap="round" stroke-linejoin="round" />
<path d="M1436.6 506.0 H1445.2 V503.0 Q1445.2 501.8 1444 501.8 H1441.8 Q1440.6 501.8 1440.6 503.0 V506.0 M1440.6 506.0 H1436.6 Q1435.4 506.0 1435.4 507.2 V509.4 Q1435.4 510.6 1436.6 510.6 H1444 Q1445.2 510.6 1445.2 509.4 V506.0 M1440.6 506.0 V510.6" fill="none" stroke="#6a6a6a" stroke-width="1.05" stroke-linecap="round" stroke-linejoin="round" />
<path d="M1435.6 544.0 H1438.8 M1431 548.6 V551.8 M1431.2 546.4 Q1431.6 544.6 1433.2 544.2 M1441.2 544.2 Q1442.8 544.6 1443.6 546.2 M1431.2 553.8 Q1431.6 555.6 1433.4 556.0" fill="none" stroke="#6a6a6a" stroke-width="1.0" stroke-linecap="round" stroke-linejoin="round" />
<path d="M1436.6 553.0 H1445.2 V550.0 Q1445.2 548.8 1444 548.8 H1441.8 Q1440.6 548.8 1440.6 550.0 V553.0 M1440.6 553.0 H1436.6 Q1435.4 553.0 1435.4 554.2 V556.4 Q1435.4 557.6 1436.6 557.6 H1444 Q1445.2 557.6 1445.2 556.4 V553.0 M1440.6 553.0 V557.6" fill="none" stroke="#6a6a6a" stroke-width="1.05" stroke-linecap="round" stroke-linejoin="round" />
<path d="M1435.6 591.1 H1438.8 M1431 595.7 V598.9 M1431.2 593.5 Q1431.6 591.7 1433.2 591.3 M1441.2 591.3 Q1442.8 591.7 1443.6 593.3 M1431.2 600.9 Q1431.6 602.7 1433.4 603.1" fill="none" stroke="#6a6a6a" stroke-width="1.0" stroke-linecap="round" stroke-linejoin="round" />
<path d="M1436.6 600.1 H1445.2 V597.1 Q1445.2 595.9 1444 595.9 H1441.8 Q1440.6 595.9 1440.6 597.1 V600.1 M1440.6 600.1 H1436.6 Q1435.4 600.1 1435.4 601.3 V603.5 Q1435.4 604.7 1436.6 604.7 H1444 Q1445.2 604.7 1445.2 603.5 V600.1 M1440.6 600.1 V604.7" fill="none" stroke="#6a6a6a" stroke-width="1.05" stroke-linecap="round" stroke-linejoin="round" />
<path d="M1435.6 672.0 H1438.8 M1431 676.6 V679.8 M1431.2 674.4 Q1431.6 672.6 1433.2 672.2 M1441.2 672.2 Q1442.8 672.6 1443.6 674.2 M1431.2 681.8 Q1431.6 683.6 1433.4 684.0" fill="none" stroke="#6a6a6a" stroke-width="1.0" stroke-linecap="round" stroke-linejoin="round" />
<path d="M1436.6 681.0 H1445.2 V678.0 Q1445.2 676.8 1444 676.8 H1441.8 Q1440.6 676.8 1440.6 678.0 V681.0 M1440.6 681.0 H1436.6 Q1435.4 681.0 1435.4 682.2 V684.4 Q1435.4 685.6 1436.6 685.6 H1444 Q1445.2 685.6 1445.2 684.4 V681.0 M1440.6 681.0 V685.6" fill="none" stroke="#6a6a6a" stroke-width="1.05" stroke-linecap="round" stroke-linejoin="round" />
<path d="M575 752.7 L578.6 756.6 L588.2 746.8" fill="none" stroke="#424242" stroke-width="1.05" stroke-linecap="round" stroke-linejoin="round" />
<path d="M645.1 745 V749.5 H649.2 M645.4 749.3 C647 746.8 649.2 745 651.8 745 C654.6 745 656.4 747.4 656.4 750.3 C656.4 752 655.4 753 654.2 754 L647.3 758.6" fill="none" stroke="#424242" stroke-width="1.05" stroke-linecap="round" stroke-linejoin="round" />
<path d="M676 741.2 V762.8" stroke="#e0e0e0" stroke-width="1"/>
<path d="M697.1 753.9 L702.1 748.7 L707.1 753.9" fill="none" stroke="#424242" stroke-width="1.05" stroke-linecap="round" stroke-linejoin="round" />
<path d="M802.9 750.1 L808.0 755.3 L813.0 750.1" fill="none" stroke="#424242" stroke-width="1.05" stroke-linecap="round" stroke-linejoin="round" />
<path d="M726.13 749.74 L728.80 748.05 V756.50" fill="none" stroke="#3a3a3a" stroke-width="1.4" stroke-linejoin="miter" stroke-linecap="butt"/>
<path d="M750.23 749.74 L752.90 748.05 V756.50" fill="none" stroke="#3a3a3a" stroke-width="1.4" stroke-linejoin="miter" stroke-linecap="butt"/></svg>

<div class="t" style="left:18.80px;top:3.04px;font-size:12.3px;font-weight:400;color:#4d4d4d;letter-spacing:-0.509px;">File</div>
<div class="t" style="left:55.60px;top:3.04px;font-size:12.3px;font-weight:700;color:#303030;letter-spacing:0.143px;">Home</div>
<div class="t" style="left:111.50px;top:3.04px;font-size:12.3px;font-weight:400;color:#4d4d4d;letter-spacing:0.027px;">Insert</div>
<div class="t" style="left:164.20px;top:3.04px;font-size:12.3px;font-weight:400;color:#4d4d4d;letter-spacing:0.036px;">Layout</div>
<div class="t" style="left:223.00px;top:3.04px;font-size:12.3px;font-weight:400;color:#4d4d4d;letter-spacing:-0.299px;">References</div>
<div class="t" style="left:305.30px;top:3.04px;font-size:12.3px;font-weight:400;color:#4d4d4d;letter-spacing:-0.346px;">Review</div>
<div class="t" style="left:364.70px;top:3.04px;font-size:12.3px;font-weight:400;color:#4d4d4d;letter-spacing:0.188px;">View</div>
<div class="t" style="left:413.00px;top:3.04px;font-size:12.3px;font-weight:400;color:#4d4d4d;letter-spacing:0.168px;">Help</div>
<div class="t" style="left:1407.40px;top:3.25px;font-size:11.7px;font-weight:400;color:#383838;letter-spacing:-0.617px;">Comments</div>
<div class="t" style="left:1500.60px;top:3.25px;font-size:11.7px;font-weight:400;color:#383838;letter-spacing:-0.483px;">Catch up</div>
<div class="t" style="left:1585.60px;top:3.25px;font-size:11.7px;font-weight:400;color:#383838;letter-spacing:-0.392px;">Editing</div>
<div class="t" style="left:1674.80px;top:3.38px;font-size:11.3px;font-weight:700;color:#f2f5fc;letter-spacing:-1.052px;">Share</div>
<div class="t" style="left:142.40px;top:39.42px;font-size:13.5px;font-weight:400;color:#3a3a3a;letter-spacing:-0.375px;">Calibri Light</div>
<div class="t" style="left:269.30px;top:39.42px;font-size:13.5px;font-weight:400;color:#3a3a3a;letter-spacing:0.384px;">6</div>
<div class="t" style="left:1140.20px;top:39.24px;font-size:17.2px;font-weight:400;color:#1f5170;letter-spacing:-0.282px;">Heading 2</div>
<div class="t" style="left:1413.40px;top:39.35px;font-size:13.7px;font-weight:400;color:#3a3a3a;letter-spacing:-0.353px;">Editor</div>
<div class="t" style="left:1487.20px;top:39.35px;font-size:13.7px;font-weight:400;color:#3a3a3a;letter-spacing:-0.218px;">Copilot</div>
<div class="t" style="left:467.70px;top:70.63px;font-size:12.6px;font-weight:700;color:#000;letter-spacing:0.077px;">Healthcare</div>
<div class="t" style="left:533.60px;top:70.63px;font-size:12.6px;font-weight:400;color:#000;letter-spacing:0.359px;">: Remote patient monitoring, clinical wearables (Healthcare</div>
<div class="t" style="left:467.70px;top:90.63px;font-size:12.6px;font-weight:400;color:#000;letter-spacing:0.443px;">customer, Northlake Health)</div>
<div class="t" style="left:467.70px;top:110.63px;font-size:12.6px;font-weight:700;color:#000;letter-spacing:0.048px;">Defense &amp; Industrial</div>
<div class="t" style="left:591.20px;top:110.63px;font-size:12.6px;font-weight:400;color:#000;letter-spacing:0.388px;">: Rugged environments requiring reliable monitoring</div>
<div class="t" style="left:467.70px;top:130.63px;font-size:12.6px;font-weight:400;color:#000;letter-spacing:0.100px;">(Relecloud, Trey Research)</div>
<div class="t" style="left:467.70px;top:150.63px;font-size:12.6px;font-weight:700;color:#000;letter-spacing:-0.238px;">Professional Sports</div>
<div class="t" style="left:583.20px;top:150.63px;font-size:12.6px;font-weight:400;color:#000;letter-spacing:0.390px;">: Medical-grade accuracy for training optimization</div>
<div class="t" style="left:424.40px;top:179.63px;font-size:12.6px;font-weight:700;color:#000;letter-spacing:-0.353px;">Key messaging:</div>
<div class="t" style="left:467.70px;top:213.63px;font-size:12.6px;font-weight:400;color:#000;letter-spacing:0.153px;">&quot;Certified to care&quot; (FDA/EU MDR Class II)</div>
<div class="t" style="left:467.70px;top:233.63px;font-size:12.6px;font-weight:400;color:#000;letter-spacing:0.292px;">&quot;Engineered for extremes&quot; (Rugged-X variant)</div>
<div class="t" style="left:467.70px;top:253.63px;font-size:12.6px;font-weight:400;color:#000;letter-spacing:0.351px;">&quot;Intelligence you can feel&quot; (haptic feedback)</div>
<div class="t" style="left:424.00px;top:317.69px;font-size:18.2px;font-weight:400;color:#336a8e;letter-spacing:-0.204px;">Market Trends &amp; Implications</div>
<div class="t" style="left:424.00px;top:345.63px;font-size:12.6px;font-weight:400;color:#000;letter-spacing:0.261px;">The smart textiles and wearable sensing landscape is moving from R&amp;D pilots to scaled</div>
<div class="t" style="left:424.00px;top:365.63px;font-size:12.6px;font-weight:400;color:#000;letter-spacing:0.452px;">deployments, driven by remote monitoring, ruggedized workwear, and better textile-</div>
<div class="t" style="left:424.00px;top:385.63px;font-size:12.6px;font-weight:400;color:#000;letter-spacing:0.341px;">integrated sensor reliability. The trends below help explain why v2 emphasizes</div>
<div class="t" style="left:424.00px;top:612.63px;font-size:12.6px;font-weight:400;color:#000;letter-spacing:0.434px;">commercial readiness (durability, manufacturability, comfort) and why v3 prioritizes</div>
<div class="t" style="left:424.00px;top:632.63px;font-size:12.6px;font-weight:400;color:#000;letter-spacing:0.282px;">certification, rugged variants, and expanded sensing.</div>
<div class="t" style="left:467.70px;top:664.63px;font-size:12.6px;font-weight:700;color:#000;letter-spacing:0.089px;">Fast growth in smart textiles / e-textiles</div>
<div class="t" style="left:708.00px;top:664.63px;font-size:12.6px;font-weight:400;color:#000;letter-spacing:0.481px;">: Market reports project strong</div>
<div class="t" style="left:467.70px;top:684.63px;font-size:12.6px;font-weight:400;color:#000;letter-spacing:0.388px;">double-digit growth through 2030, reflecting rising adoption across healthcare,</div>
<div class="t" style="left:467.70px;top:704.63px;font-size:12.6px;font-weight:400;color:#000;letter-spacing:0.462px;">sports/fitness, and defense/protection.</div>
<div class="t" style="left:467.70px;top:724.63px;font-size:12.6px;font-weight:700;color:#000;letter-spacing:0.300px;">Durability &amp; washability</div>
<div class="t" style="left:826.80px;top:724.63px;font-size:12.6px;font-weight:400;color:#000;letter-spacing:0.405px;">ader adoption,</div>
<div class="t" style="left:467.70px;top:744.63px;font-size:12.6px;font-weight:400;color:#000;letter-spacing:0.360px;">many industry sources</div>
<div class="t" style="left:828.60px;top:744.63px;font-size:12.6px;font-weight:400;color:#000;letter-spacing:0.018px;">cycles, robustness</div>
<div class="t" style="left:467.70px;top:764.63px;font-size:12.6px;font-weight:400;color:#000;letter-spacing:0.380px;">under bending/stretch, and manufacturing yield as key commercialization</div>
<div class="t" style="left:1414.30px;top:114.98px;font-size:11.6px;font-weight:400;color:#333;letter-spacing:-0.884px;">Today</div>
<div class="t" style="left:1424.60px;top:167.00px;font-size:13.0px;font-weight:700;color:#303030;letter-spacing:-1.135px;z-index:6;">Sources</div>
<div class="t" style="left:1428.40px;top:218.33px;font-size:10.6px;font-weight:700;color:#242424;letter-spacing:-0.291px;z-index:6;">Citations</div>
<div class="t" style="left:1457.30px;top:250.51px;font-size:11.8px;font-weight:700;color:#424242;letter-spacing:0.172px;z-index:6;">Smart Textiles Market Report, Industr...</div>
<div class="t" style="left:1457.30px;top:267.36px;font-size:10.5px;font-weight:400;color:#616161;letter-spacing:0.081px;z-index:6;">strategicmarketresearch.com</div>
<div class="t" style="left:1457.30px;top:297.58px;font-size:11.8px;font-weight:700;color:#424242;letter-spacing:0.119px;z-index:6;">Smart Textiles with Integrated Electro...</div>
<div class="t" style="left:1457.30px;top:314.43px;font-size:10.5px;font-weight:400;color:#616161;letter-spacing:0.157px;z-index:6;">gminsights.com</div>
<div class="t" style="left:1457.30px;top:344.65px;font-size:11.8px;font-weight:700;color:#424242;letter-spacing:0.229px;z-index:6;">Smart Textiles Market Report 2025 - 2...</div>
<div class="t" style="left:1457.30px;top:361.50px;font-size:10.5px;font-weight:400;color:#616161;letter-spacing:0.087px;z-index:6;">marketsandmarkets.com</div>
<div class="t" style="left:1457.30px;top:391.72px;font-size:11.8px;font-weight:700;color:#424242;letter-spacing:0.081px;z-index:6;">Smart wearable fibers and textiles: sta...</div>
<div class="t" style="left:1457.30px;top:408.57px;font-size:10.5px;font-weight:400;color:#616161;letter-spacing:-0.007px;z-index:6;">pubs.rsc.org</div>
<div class="t" style="left:1457.30px;top:438.79px;font-size:11.8px;font-weight:700;color:#424242;letter-spacing:0.093px;z-index:6;">Transforming healthcare and fitness w...</div>
<div class="t" style="left:1457.30px;top:455.64px;font-size:10.5px;font-weight:400;color:#616161;letter-spacing:0.151px;z-index:6;">link.springer.com</div>
<div class="t" style="left:1457.30px;top:485.86px;font-size:11.8px;font-weight:700;color:#424242;letter-spacing:0.209px;z-index:6;">Smart Textiles for Military Market - Si...</div>
<div class="t" style="left:1457.30px;top:502.71px;font-size:10.5px;font-weight:400;color:#616161;letter-spacing:0.245px;z-index:6;">mordorintelligence.com</div>
<div class="t" style="left:1457.30px;top:532.93px;font-size:11.8px;font-weight:700;color:#424242;letter-spacing:0.202px;z-index:6;">Smart Textiles For Military - Market S...</div>
<div class="t" style="left:1457.30px;top:549.78px;font-size:10.5px;font-weight:400;color:#616161;letter-spacing:0.035px;z-index:6;">researchandmarkets.com</div>
<div class="t" style="left:1457.30px;top:580.00px;font-size:11.8px;font-weight:700;color:#424242;letter-spacing:0.134px;z-index:6;">Remote Patient Assessment Monitori...</div>
<div class="t" style="left:1457.30px;top:596.85px;font-size:10.5px;font-weight:400;color:#616161;letter-spacing:0.132px;z-index:6;">towardshealthcare.com</div>
<div class="t" style="left:1428.40px;top:628.33px;font-size:10.6px;font-weight:700;color:#242424;letter-spacing:0.229px;z-index:6;">More</div>
<div class="t" style="left:1457.30px;top:660.91px;font-size:11.8px;font-weight:700;color:#424242;letter-spacing:0.126px;z-index:6;">Smart Textile Market Size, Share, Dem...</div>
<div class="t" style="left:1457.30px;top:677.56px;font-size:10.5px;font-weight:400;color:#616161;letter-spacing:0.062px;z-index:6;">maximizemarketresearch.com</div>
<div class="t" style="left:1466.70px;top:768.28px;font-size:11.6px;font-weight:400;color:#333;letter-spacing:-0.325px;">AI-generated content may be incorrect</div>
<div class="t" style="left:595.40px;top:741.96px;font-size:12.8px;font-weight:400;color:#3a3a3a;letter-spacing:-0.164px;z-index:6;">Keep</div>
<div class="t" style="left:733.60px;top:741.96px;font-size:12.8px;font-weight:400;color:#3a3a3a;letter-spacing:1.913px;z-index:6;">of</div>
<div class="t" style="left:757.40px;top:741.96px;font-size:12.8px;font-weight:400;color:#3a3a3a;letter-spacing:0.142px;z-index:6;">edits</div>

</div>
</body></html>
